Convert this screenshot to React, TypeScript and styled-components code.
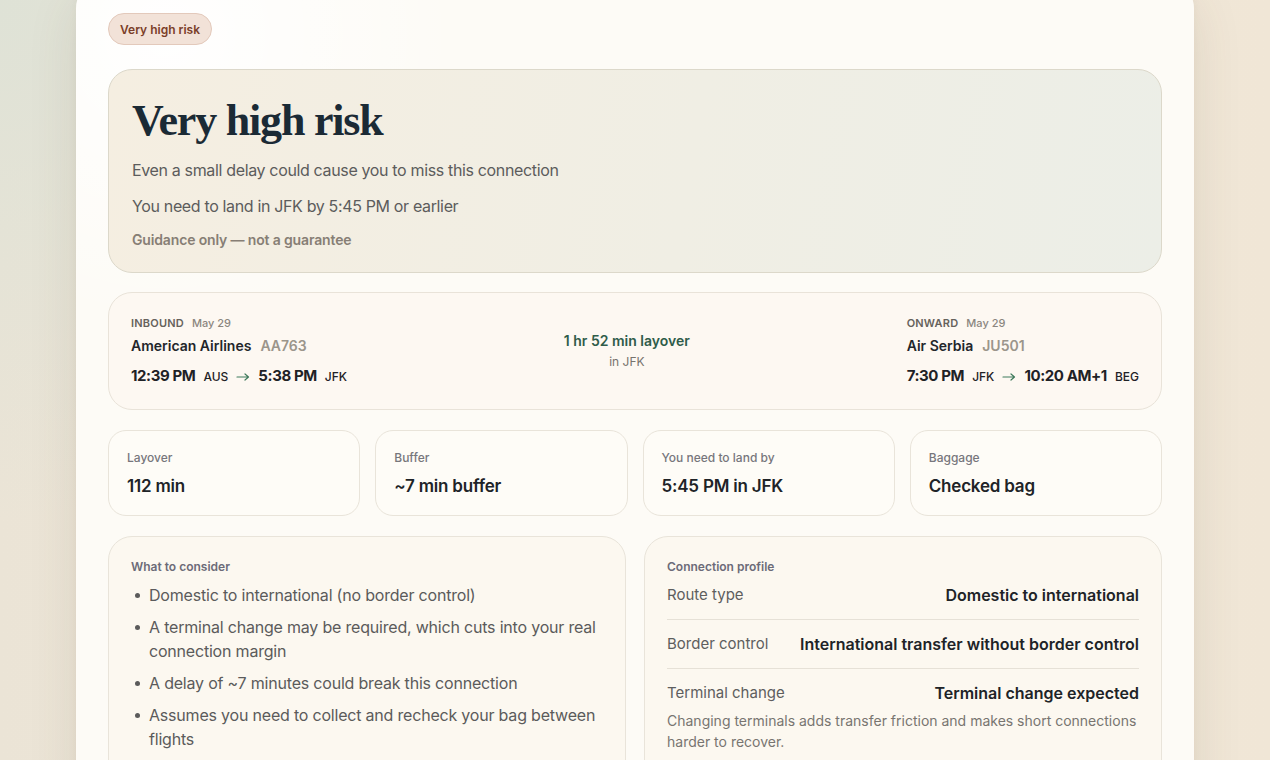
import React from "react";
import styled, { createGlobalStyle } from "styled-components";

const GlobalStyle = createGlobalStyle`
  html, body {
    margin: 0;
    padding: 0;
  }
  body {
    height: 760px;
    overflow: hidden;
    font-family: Inter, "Noto Sans", sans-serif;
    background:
      radial-gradient(ellipse 420px 520px at 0% 0%, rgba(222, 226, 214, 0.95), rgba(222, 226, 214, 0) 100%),
      linear-gradient(90deg, #ebe4d6 0%, #f1e9db 50%, #f0e6d6 100%);
    color: #1f2328;
  }
`;

const Page = styled.div`
  display: flex;
  justify-content: center;
  padding: 0 76px;
`;

const Sheet = styled.main`
  width: 1118px;
  box-sizing: border-box;
  margin-top: -20px;
  padding: 33px 32px 40px;
  border-radius: 28px;
  background:
    radial-gradient(circle at 8% 6%, rgba(255, 255, 255, 0.95), rgba(255, 255, 255, 0) 22%),
    #fdfbf6;
  box-shadow: 0 18px 50px rgba(90, 75, 50, 0.12), 0 2px 8px rgba(90, 75, 50, 0.05);
  display: flex;
  flex-direction: column;
  gap: 20px;
`;

const Badge = styled.span`
  align-self: flex-start;
  height: 32px;
  box-sizing: border-box;
  display: inline-flex;
  align-items: center;
  padding: 0 11px;
  border-radius: 16px;
  background: #f2e2d8;
  border: 1px solid #e3c9bb;
  color: #7b3e29;
  font-size: 12px;
  font-weight: 600;
  margin-bottom: 4px;
`;

const Hero = styled.section`
  border-radius: 24px;
  border: 1px solid #dcd8ca;
  background: linear-gradient(100deg, #f5eee1 0%, #f0eee4 55%, #eceee7 100%);
  padding: 29px 23px 22px;
  margin-bottom: -1px;
`;

const HeroTitle = styled.h1`
  margin: 0 0 15px;
  font-family: "Liberation Serif", "DejaVu Serif", serif;
  font-weight: 700;
  font-size: 44px;
  line-height: 44px;
  letter-spacing: -1.2px;
  color: #1b2a35;
`;

const HeroLine = styled.p`
  margin: 0 0 12px;
  font-size: 16px;
  line-height: 24px;
  letter-spacing: -0.35px;
  color: #5c5c5c;
`;

const HeroNote = styled.p`
  margin: 0;
  font-size: 14px;
  line-height: 20px;
  font-weight: 600;
  letter-spacing: -0.15px;
  color: #877e75;
`;

const FlightCard = styled.section`
  border-radius: 24px;
  border: 1px solid #e9e3d9;
  background: #fdf8f2;
  padding: 22px 22px 22px;
  display: flex;
  justify-content: space-between;
  align-items: flex-start;
`;

const Leg = styled.div`
  display: flex;
  flex-direction: column;
`;

const LegHead = styled.div`
  display: flex;
  gap: 8px;
  font-size: 11px;
  line-height: 16px;
  margin-bottom: 5px;
`;

const Direction = styled.span`
  font-weight: 600;
  color: #66625c;
  letter-spacing: 0.2px;
`;

const LegDate = styled.span`
  font-weight: 500;
  color: #8b867f;
`;

const Carrier = styled.div`
  display: flex;
  gap: 9px;
  font-size: 14px;
  line-height: 20px;
  font-weight: 600;
  color: #23262b;
  margin-bottom: 9px;
`;

const FlightNo = styled.span`
  color: #9b958b;
`;

const Times = styled.div`
  display: flex;
  align-items: center;
  height: 22px;
  color: #1f2226;
`;

const Time = styled.span`
  font-size: 15px;
  line-height: 22px;
  font-weight: 700;
  letter-spacing: -0.4px;
`;

const Code = styled.span`
  font-size: 12px;
  line-height: 22px;
  font-weight: 500;
  margin-left: 8px;
  padding-top: 1px;
`;

const ArrowSvg = styled.svg`
  margin: 1px 8px 0;
  flex-shrink: 0;
`;

const Arrow = () => (
  <ArrowSvg width="14" height="10" viewBox="0 0 14 10" fill="none">
    <path d="M1 5h11.5M9 2l3.5 3L9 8" stroke="#3f7a5c" strokeWidth="1.2" strokeLinecap="round" strokeLinejoin="round" />
  </ArrowSvg>
);

const Layover = styled.div`
  display: flex;
  flex-direction: column;
  align-items: center;
  padding-top: 16px;
`;

const LayoverText = styled.span`
  font-size: 14px;
  line-height: 20px;
  font-weight: 600;
  color: #2f5c4a;
`;

const LayoverPlace = styled.span`
  font-size: 12px;
  line-height: 18px;
  color: #77736d;
  margin-top: 2px;
`;

const Stats = styled.div`
  display: grid;
  grid-template-columns: repeat(4, 1fr);
  gap: 15px;
`;

const Stat = styled.div`
  border-radius: 18px;
  border: 1px solid #e9e4da;
  background: #fefcf7;
  padding: 19px 18px 17px;
  display: flex;
  flex-direction: column;
  gap: 8px;
`;

const StatLabel = styled.span`
  font-size: 12px;
  line-height: 16px;
  font-weight: 500;
  color: #77767c;
`;

const StatValue = styled.span`
  font-size: 17px;
  line-height: 24px;
  font-weight: 600;
  letter-spacing: -0.2px;
  color: #202327;
`;

const Panels = styled.div`
  display: grid;
  grid-template-columns: 1fr 1fr;
  gap: 18px;
`;

const Panel = styled.section`
  border-radius: 24px;
  border: 1px solid #e9e4da;
  background: #fcf8f0;
  padding: 22px 22px 20px;
  height: 260px;
`;

const PanelTitle = styled.h3`
  margin: 0 0 8px;
  font-size: 12px;
  line-height: 16px;
  font-weight: 600;
  color: #6c6b78;
`;

const List = styled.ul`
  margin: 0;
  padding: 0;
  list-style: none;
  display: flex;
  flex-direction: column;
  gap: 8px;
`;

const Item = styled.li`
  position: relative;
  padding-left: 18px;
  font-size: 16px;
  line-height: 24px;
  letter-spacing: -0.2px;
  color: #5b5b5b;
  &::before {
    content: "";
    position: absolute;
    left: 4px;
    top: 10px;
    width: 5px;
    height: 5px;
    border-radius: 50%;
    background: #5b5b5b;
  }
`;

const Row = styled.div<{ $last?: boolean }>`
  padding: 12px 0;
  border-bottom: ${(p) => (p.$last ? "none" : "1px solid #e6e1d7")};
  &:first-of-type {
    padding-top: 0;
  }
`;

const RowMain = styled.div`
  display: flex;
  justify-content: space-between;
  align-items: center;
  gap: 24px;
  height: 24px;
`;

const RowLabel = styled.span`
  font-size: 15px;
  line-height: 24px;
  color: #5e5e5e;
  white-space: nowrap;
`;

const RowValue = styled.span`
  font-size: 16px;
  line-height: 24px;
  font-weight: 600;
  color: #202327;
  text-align: right;
`;

const RowNote = styled.p`
  margin: 5px 0 0;
  font-size: 14px;
  line-height: 21px;
  color: #787570;
`;

const stats = [
  { label: "Layover", value: "112 min" },
  { label: "Buffer", value: "~7 min buffer" },
  { label: "You need to land by", value: "5:45 PM in JFK" },
  { label: "Baggage", value: "Checked bag" },
];

const considerations = [
  "Domestic to international (no border control)",
  "A terminal change may be required, which cuts into your real connection margin",
  "A delay of ~7 minutes could break this connection",
  "Assumes you need to collect and recheck your bag between flights",
];

export default function App() {
  return (
    <>
      <GlobalStyle />
      <Page>
        <Sheet>
          <Badge>Very high risk</Badge>

          <Hero>
            <HeroTitle>Very high risk</HeroTitle>
            <HeroLine>Even a small delay could cause you to miss this connection</HeroLine>
            <HeroLine>You need to land in JFK by 5:45 PM or earlier</HeroLine>
            <HeroNote>Guidance only — not a guarantee</HeroNote>
          </Hero>

          <FlightCard>
            <Leg>
              <LegHead>
                <Direction>INBOUND</Direction>
                <LegDate>May 29</LegDate>
              </LegHead>
              <Carrier>
                American Airlines <FlightNo>AA763</FlightNo>
              </Carrier>
              <Times>
                <Time>12:39 PM</Time>
                <Code>AUS</Code>
                <Arrow />
                <Time>5:38 PM</Time>
                <Code>JFK</Code>
              </Times>
            </Leg>
            <Layover>
              <LayoverText>1 hr 52 min layover</LayoverText>
              <LayoverPlace>in JFK</LayoverPlace>
            </Layover>
            <Leg>
              <LegHead>
                <Direction>ONWARD</Direction>
                <LegDate>May 29</LegDate>
              </LegHead>
              <Carrier>
                Air Serbia <FlightNo>JU501</FlightNo>
              </Carrier>
              <Times>
                <Time>7:30 PM</Time>
                <Code>JFK</Code>
                <Arrow />
                <Time>10:20 AM+1</Time>
                <Code>BEG</Code>
              </Times>
            </Leg>
          </FlightCard>

          <Stats>
            {stats.map((s) => (
              <Stat key={s.label}>
                <StatLabel>{s.label}</StatLabel>
                <StatValue>{s.value}</StatValue>
              </Stat>
            ))}
          </Stats>

          <Panels>
            <Panel>
              <PanelTitle>What to consider</PanelTitle>
              <List>
                {considerations.map((c) => (
                  <Item key={c}>{c}</Item>
                ))}
              </List>
            </Panel>
            <Panel>
              <PanelTitle>Connection profile</PanelTitle>
              <Row>
                <RowMain>
                  <RowLabel>Route type</RowLabel>
                  <RowValue>Domestic to international</RowValue>
                </RowMain>
              </Row>
              <Row>
                <RowMain>
                  <RowLabel>Border control</RowLabel>
                  <RowValue>International transfer without border control</RowValue>
                </RowMain>
              </Row>
              <Row $last>
                <RowMain>
                  <RowLabel>Terminal change</RowLabel>
                  <RowValue>Terminal change expected</RowValue>
                </RowMain>
                <RowNote>
                  Changing terminals adds transfer friction and makes short connections harder to
                  recover.
                </RowNote>
              </Row>
            </Panel>
          </Panels>
        </Sheet>
      </Page>
    </>
  );
}
